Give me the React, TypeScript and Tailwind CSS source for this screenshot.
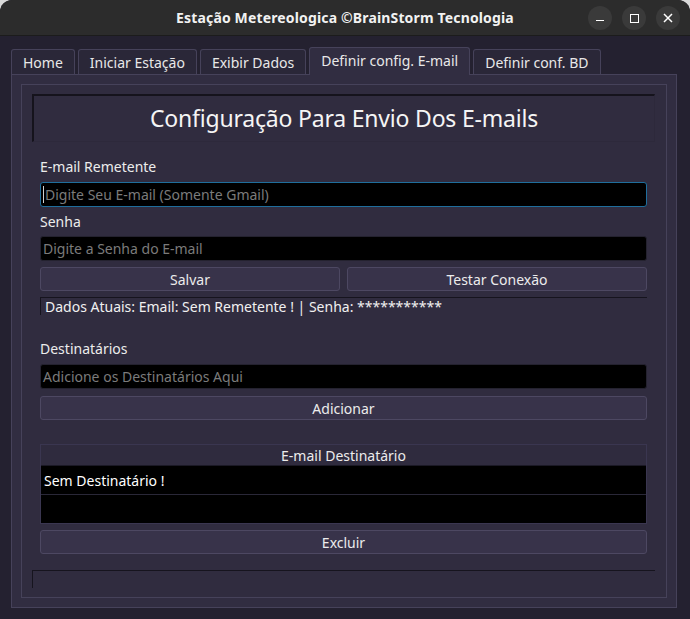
import React from "react";

const font = { fontFamily: '"Noto Sans", "Open Sans", sans-serif' };

function Btn({ children, className = "" }: { children: React.ReactNode; className?: string }) {
  return (
    <div
      className={
        "h-[24px] flex items-center justify-center rounded-[3px] border border-[#4d4862] bg-[#38334a] text-[14px] text-[#ececec] " +
        className
      }
    >
      {children}
    </div>
  );
}

function Input({ placeholder, focus = false }: { placeholder: string; focus?: boolean }) {
  return (
    <div
      className={
        "h-[25px] flex items-center rounded-[3px] bg-black px-[2px] text-[14px] text-[#7b7b7b] border " +
        (focus ? "border-[#1f6e9c]" : "border-[#24222f]")
      }
    >
      {focus && <span className="w-px h-[17px] bg-[#d0d0d0] mr-px" />}
      <span>{placeholder}</span>
    </div>
  );
}

export default function App() {
  const tabs = ["Home", "Iniciar Estação", "Exibir Dados", "Definir config. E-mail", "Definir conf. BD"];
  return (
    <div className="w-[690px] h-[619px] bg-[#d9d9d9]" style={font}>
      <div className="w-full h-full flex flex-col rounded-t-[12px] overflow-hidden bg-[#242130]">
        {/* Title bar */}
        <div className="h-[36px] shrink-0 bg-[#2c2c2c] relative flex items-center justify-center border-b border-[#1c1c1c]">
          <span className="text-[14px] font-bold text-[#f2f2f2] tracking-[0.15px]">Estação Metereologica ©BrainStorm Tecnologia</span>
          <div className="absolute right-[10px] top-[6px] flex gap-[10px]">
            <div className="w-[24px] h-[24px] rounded-full bg-[#3a3a3a] flex items-center justify-center">
              <div className="w-[8px] h-[1.5px] bg-white mt-[5px]" />
            </div>
            <div className="w-[24px] h-[24px] rounded-full bg-[#3a3a3a] flex items-center justify-center">
              <div className="w-[9px] h-[9px] border-[1.5px] border-white" />
            </div>
            <div className="w-[24px] h-[24px] rounded-full bg-[#3a3a3a] flex items-center justify-center">
              <svg width="10" height="10" viewBox="0 0 10 10">
                <path d="M1 1 L9 9 M9 1 L1 9" stroke="white" strokeWidth="1.5" />
              </svg>
            </div>
          </div>
        </div>

        {/* Body */}
        <div className="flex-1 flex flex-col pl-[11px] pr-[13px] pt-[11px] pb-[11px]">
          {/* Tabs */}
          <div className="flex items-end h-[27px] gap-[3px] relative z-10">
            {tabs.map((t, i) => {
              const active = i === 3;
              return (
                <div
                  key={t}
                  className={
                    "flex items-center px-[11px] text-[14px] text-[#e8e8e8] border border-[#46425a] rounded-t-[3px] " +
                    (active ? "h-[28px] bg-[#312d41] border-b-0 -mb-px pb-[3px]" : "h-[25px] bg-[#2a2738] border-b-0")
                  }
                >
                  {t}
                </div>
              );
            })}
          </div>
          {/* Pane */}
          <div className="flex-1 border border-[#46425a] bg-[#312d41] p-[9px] flex flex-col">
            <div className="flex-1 border border-[#46425a] bg-[#302c3f] flex flex-col pt-[9px] pb-[9px]">
              {/* Header frame */}
              <div className="ml-[10px] mr-[11px] h-[48px] border-t-2 border-l-2 border-t-[#15131c] border-l-[#15131c] border-r border-b border-r-[#2d293b] border-b-[#2d293b] flex items-center justify-center">
                <span className="text-[23px] text-[#f5f5f5] tracking-[-0.2px]">Configuração Para Envio Dos E-mails</span>
              </div>

              <div className="pl-[18px] pr-[19px] flex flex-col">
                <div className="text-[14px] text-[#ececec] mt-[15px] h-[20px] leading-[20px]">E-mail Remetente</div>
                <div className="mt-[5px]">
                  <Input placeholder="Digite Seu E-mail (Somente Gmail)" focus />
                </div>
                <div className="text-[14px] text-[#ececec] mt-[5px] h-[20px] leading-[20px]">Senha</div>
                <div className="mt-[4px]">
                  <Input placeholder="Digite a Senha do E-mail" />
                </div>
                <div className="mt-[6px] flex gap-[7px]">
                  <Btn className="flex-1">Salvar</Btn>
                  <Btn className="flex-1">Testar Conexão</Btn>
                </div>
                <div className="mt-[6px] h-[18px] border-t border-l border-[#16141e] flex items-center pl-[4px] text-[14px] text-[#f0f0f0] leading-none">
                  Dados Atuais: Email: Sem Remetente ! | Senha: ***********
                </div>
                <div className="text-[14px] text-[#ececec] mt-[24px] h-[20px] leading-[20px]">Destinatários</div>
                <div className="mt-[5px]">
                  <Input placeholder="Adicione os Destinatários Aqui" />
                </div>
                <div className="mt-[7px]">
                  <Btn>Adicionar</Btn>
                </div>
                {/* Table */}
                <div className="mt-[24px] h-[80px] border border-[#3a3650] bg-black flex flex-col">
                  <div className="h-[21px] bg-[#2f2b3e] border-b border-[#1b1925] flex items-center justify-center text-[14px] text-[#ececec]">
                    E-mail Destinatário
                  </div>
                  <div className="h-[29px] border-b border-[#2a2838] flex items-center pl-[3px] text-[14px] text-white">
                    Sem Destinatário !
                  </div>
                </div>
                <div className="mt-[6px]">
                  <Btn>Excluir</Btn>
                </div>
              </div>
              <div className="flex-1" />
              <div className="ml-[10px] mr-[11px] h-[18px] border-t border-l border-[#16141e]" />
            </div>
          </div>
        </div>
      </div>
    </div>
  );
}
